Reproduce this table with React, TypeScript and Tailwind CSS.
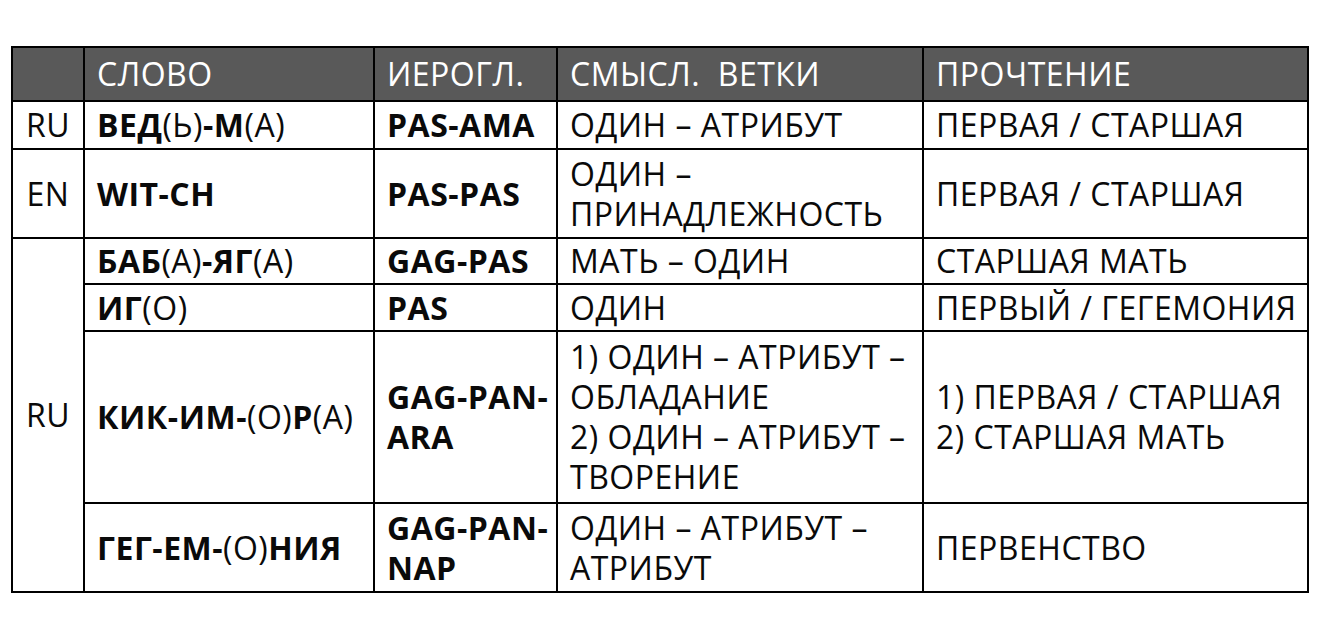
import type { ReactNode } from 'react';

const B = ({ children }: { children: ReactNode }) => <b className="font-bold">{children}</b>;

const cell = 'border-2 border-black px-[12px] align-middle whitespace-nowrap';

export default function App() {
  return (
    <div className="min-h-[639px] bg-white pl-[11px] pt-[46px] font-['Open_Sans'] text-[32px] leading-[40px] tracking-[0.5px] text-[#0a0a0a]">
      <table className="w-[1296px] table-fixed border-collapse border-2 border-black">
        <colgroup>
          <col className="w-[72px]" />
          <col className="w-[290px]" />
          <col className="w-[183px]" />
          <col className="w-[366px]" />
          <col className="w-[385px]" />
        </colgroup>
        <thead>
          <tr className="h-[54px] bg-[#595959] text-white">
            <th className={cell + ' font-normal'} />
            <th className={cell + ' text-left font-normal'}>СЛОВО</th>
            <th className={cell + ' text-left font-normal'}>ИЕРОГЛ.</th>
            <th className={cell + ' text-left font-normal whitespace-pre'}>СМЫСЛ.  ВЕТКИ</th>
            <th className={cell + ' text-left font-normal'}>ПРОЧТЕНИЕ</th>
          </tr>
        </thead>
        <tbody>
          <tr className="h-[48px]">
            <td className={cell + ' text-center'}>RU</td>
            <td className={cell}>
              <B>ВЕД</B>(Ь)<B>-М</B>(А)
            </td>
            <td className={cell}><B>PAS-AMA</B></td>
            <td className={cell}>ОДИН – АТРИБУТ</td>
            <td className={cell}>ПЕРВАЯ / СТАРШАЯ</td>
          </tr>
          <tr className="h-[89px]">
            <td className={cell + ' text-center'}>EN</td>
            <td className={cell}><B>WIT-CH</B></td>
            <td className={cell}><B>PAS-PAS</B></td>
            <td className={cell}>
              ОДИН –<br />ПРИНАДЛЕЖНОСТЬ
            </td>
            <td className={cell}>ПЕРВАЯ / СТАРШАЯ</td>
          </tr>
          <tr className="h-[46px]">
            <td className={cell + ' text-center'} rowSpan={4}>RU</td>
            <td className={cell}>
              <B>БАБ</B>(А)<B>-ЯГ</B>(А)
            </td>
            <td className={cell}><B>GAG-PAS</B></td>
            <td className={cell}>МАТЬ – ОДИН</td>
            <td className={cell}>СТАРШАЯ МАТЬ</td>
          </tr>
          <tr className="h-[47px]">
            <td className={cell}>
              <B>ИГ</B>(О)
            </td>
            <td className={cell}><B>PAS</B></td>
            <td className={cell}>ОДИН</td>
            <td className={cell}>ПЕРВЫЙ / ГЕГЕМОНИЯ</td>
          </tr>
          <tr className="h-[172px]">
            <td className={cell}>
              <B>КИК-ИМ-</B>(О)<B>Р</B>(А)
            </td>
            <td className={cell}>
              <B>
                GAG-PAN-
                <br />
                ARA
              </B>
            </td>
            <td className={cell}>
              1) ОДИН – АТРИБУТ –<br />
              ОБЛАДАНИЕ
              <br />
              2) ОДИН – АТРИБУТ –<br />
              ТВОРЕНИЕ
            </td>
            <td className={cell}>
              1) ПЕРВАЯ / СТАРШАЯ
              <br />
              2) СТАРШАЯ МАТЬ
            </td>
          </tr>
          <tr className="h-[89px]">
            <td className={cell}>
              <B>ГЕГ-ЕМ-</B>(О)<B>НИЯ</B>
            </td>
            <td className={cell}>
              <B>
                GAG-PAN-
                <br />
                NAP
              </B>
            </td>
            <td className={cell}>
              ОДИН – АТРИБУТ –<br />
              АТРИБУТ
            </td>
            <td className={cell}>ПЕРВЕНСТВО</td>
          </tr>
        </tbody>
      </table>
    </div>
  );
}
